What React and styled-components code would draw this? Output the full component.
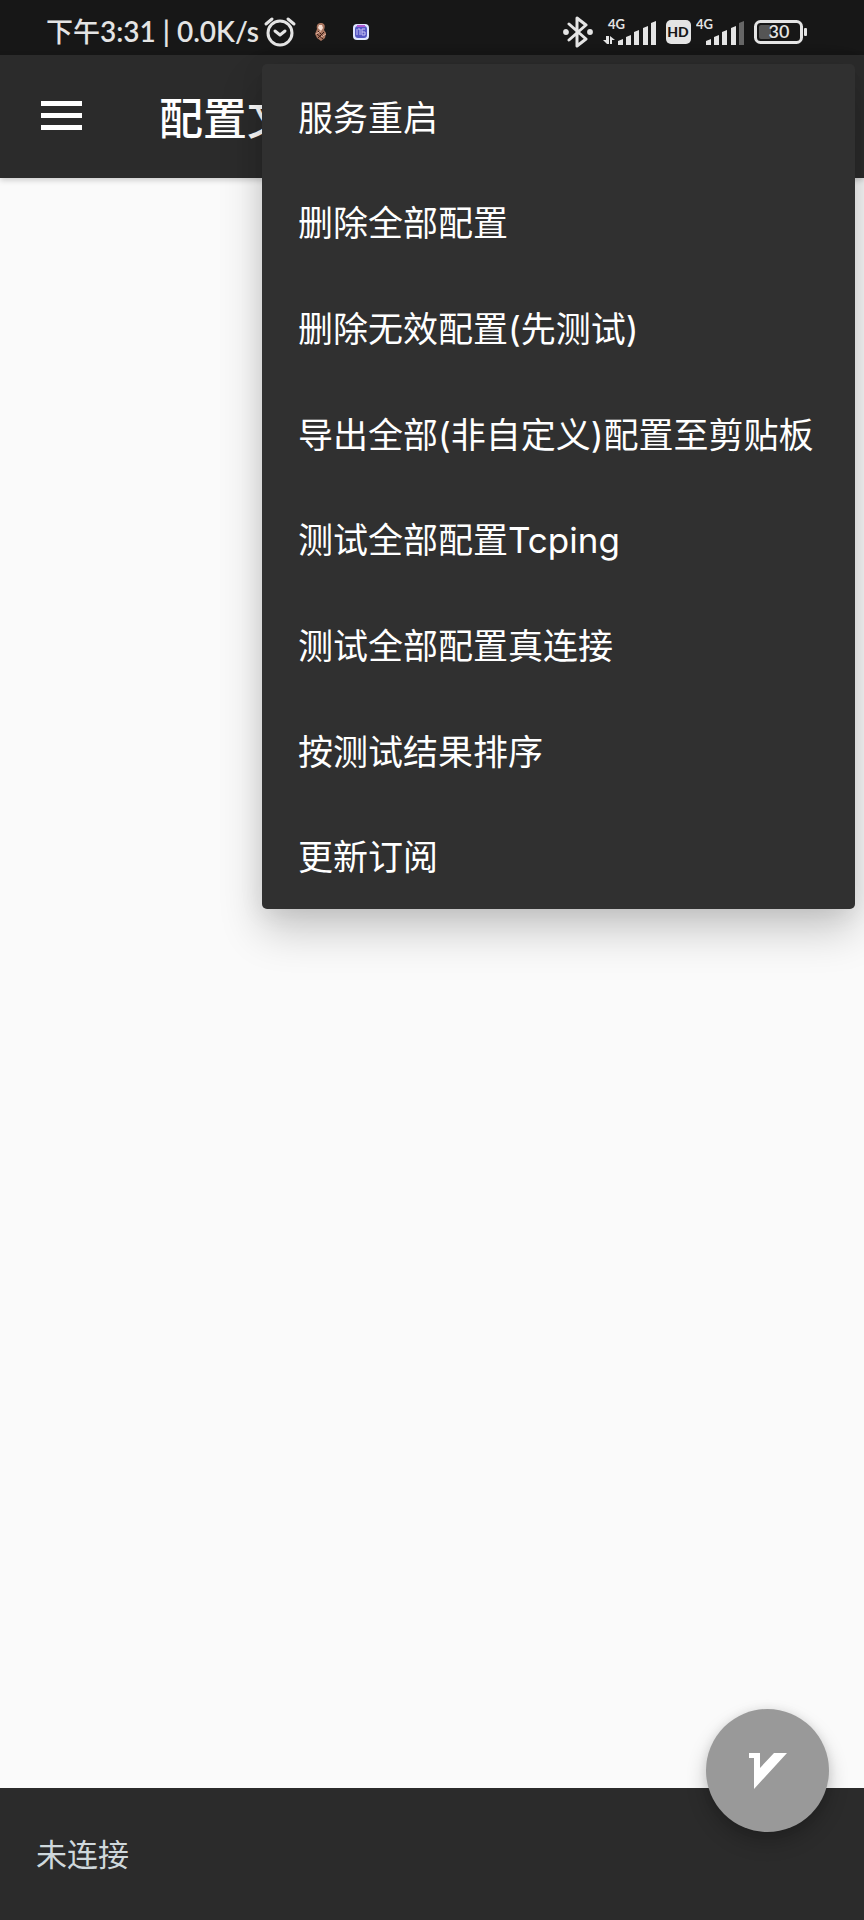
import React from "react";
import styled, { createGlobalStyle } from "styled-components";

const GlobalStyle = createGlobalStyle`
  *, *::before, *::after { box-sizing: border-box; }
  body { margin: 0; background: #fafafa; font-family: Inter, "Noto Sans CJK SC", sans-serif; }
  button { font: inherit; border: 0; cursor: pointer; }
`;

const Screen = styled.div`
  position: relative;
  display: flex;
  flex-direction: column;
  min-height: 100vh;
  overflow: hidden;
`;

const StatusBar = styled.div`
  display: flex;
  align-items: center;
  justify-content: space-between;
  height: 55px;
  padding: 0 56px 4px 46px;
  background: #171717;
  color: #e4e4e4;
`;

const StatusGroup = styled.div`
  display: flex;
  align-items: center;
  gap: ${(p) => p.$gap}px;
  padding-top: ${(p) => p.$top || 0}px;
`;

const Clock = styled.span`
  font-family: Lato, "Noto Sans CJK SC", sans-serif;
  font-size: 27px;
  line-height: 32px;
  font-weight: 500;
  white-space: pre;
`;

const ClockDigits = styled.span`
  font-size: 28px;
  font-weight: 600;
`;

const Notifications = styled.div`
  display: flex;
  align-items: center;
  gap: 26px;
  padding-left: 14px;
`;

const AppBar = styled.header`
  display: flex;
  align-items: center;
  gap: 71px;
  height: 123px;
  padding: 2px 35px 0;
  background: #2b2b2b;
  box-shadow: 0 2px 6px rgba(0, 0, 0, 0.2);
  z-index: 1;
`;

const IconButton = styled.button`
  display: flex;
  padding: 0 0 4px;
  background: none;
  color: #fff;
`;

const Title = styled.h1`
  margin: 0;
  padding-top: 2px;
  color: #fff;
  font-size: 44px;
  line-height: 56px;
  font-weight: 500;
  white-space: nowrap;
`;

const Content = styled.main`
  flex: 1;
  background: #fafafa;
`;

const Footer = styled.footer`
  display: flex;
  align-items: center;
  height: 132px;
  padding: 2px 36px 0;
  background: #2b2b2b;
  color: #cfd8dc;
  font-size: 31px;
  line-height: 40px;
`;

const Menu = styled.div`
  position: absolute;
  z-index: 3;
  top: 64px;
  right: 9px;
  display: grid;
  grid-auto-rows: 1fr;
  min-width: 593px;
  min-height: 845px;
  background: #303030;
  border-radius: 5px;
  box-shadow: 0 22px 44px rgba(0, 0, 0, 0.2), 0 4px 24px rgba(0, 0, 0, 0.08);
`;

const MenuItem = styled.button`
  padding: 2px 36px 0;
  background: none;
  color: #fff;
  font-size: 35px;
  line-height: 48px;
  text-align: left;
  white-space: nowrap;
`;

const Fab = styled.button`
  position: absolute;
  z-index: 2;
  right: 35px;
  bottom: 88px;
  display: grid;
  place-items: center;
  width: 123px;
  height: 123px;
  padding: 0;
  border-radius: 50%;
  background: #999;
  box-shadow: 0 10px 20px rgba(0, 0, 0, 0.22), 0 0 10px rgba(0, 0, 0, 0.08);
`;

const SvgText = styled.text`
  font-family: Lato, sans-serif;
  font-weight: ${(p) => p.$weight || 700};
  font-size: ${(p) => p.$size}px;
`;

const AlarmIcon = () => (
  <svg width="34" height="32" viewBox="0 0 34 32" fill="none" stroke="#e4e4e4" strokeWidth="3" strokeLinecap="round" strokeLinejoin="round" aria-hidden="true">
    <circle cx="17" cy="17" r="12" />
    <path d="M12 15l5 4 5-4" />
    <path d="M3 8l6-5M31 8l-6-5" />
  </svg>
);

const FigureIcon = () => (
  <svg width="12" height="18" viewBox="0 0 12 18" aria-hidden="true">
    <path d="M6 0C3 0 1 2 2 6L0 11l2 4 4 3 4-3 1-5-2-3C11 2 9 0 6 0z" fill="#a8755f" />
    <path d="M4 2h3l1 3-2 3-3-3z" fill="#f6ded2" />
    <path d="M3 8l5 5M9 9l-6 6M2 11l6 5" stroke="#3b1c16" strokeWidth="1" />
    <path d="M1 11l5-3M6 14l5-3" stroke="#e7b6a3" strokeWidth="1" />
  </svg>
);

const BadgeIcon = () => (
  <svg width="16" height="16" viewBox="0 0 16 16" aria-hidden="true">
    <rect width="16" height="16" rx="4" fill="#dfe6ff" />
    <rect x="2" y="2" width="12" height="12" rx="3" fill="#5557c4" />
    <path d="M4 2h8" stroke="#b05ad0" strokeWidth="2" />
    <path d="M4 5v6M7 5h-2M7 5v6M12 5H9v6h3V8H9" fill="none" stroke="#c9c4f5" strokeWidth="1" />
  </svg>
);

const BluetoothIcon = () => (
  <svg width="30" height="32" viewBox="0 0 30 32" fill="none" stroke="#e4e4e4" strokeWidth="3" strokeLinejoin="round" strokeLinecap="round" aria-hidden="true">
    <path d="M6 8l17 15-9 7V2l9 7L6 24" />
    <circle cx="3" cy="16" r="1.4" fill="#e4e4e4" />
    <circle cx="27" cy="16" r="1.4" fill="#e4e4e4" />
  </svg>
);

const BARS = [
  [0, 23],
  [8, 19],
  [16, 14],
  [25, 10],
  [33, 5],
];

const SignalIcon = ({ offset, dim, arrows }) => (
  <svg width={offset + 38} height="32" viewBox={`0 0 ${offset + 38} 32`} fill="#e4e4e4" aria-label="4G">
    <SvgText x={arrows ? 5 : 0} y="13" $size={13}>4G</SvgText>
    {arrows && <path d="M6 20v8H4L0 24h3v-4zM7 28v-8l5 4H9v4z" />}
    {BARS.map(([x, y], i) => (
      <path
        key={x}
        d={`M${offset + x} ${y + 2}l5-2V29h-5z`}
        fill={dim && i === 4 ? "#666" : "#e4e4e4"}
      />
    ))}
  </svg>
);

const HdIcon = () => (
  <svg width="25" height="24" viewBox="0 0 25 24" aria-label="HD">
    <rect width="25" height="24" rx="5" fill="#e4e4e4" />
    <SvgText x="12" y="17" textAnchor="middle" fill="#171717" $size={14} $weight={900}>HD</SvgText>
  </svg>
);

const BatteryIcon = () => (
  <svg width="54" height="24" viewBox="0 0 54 24" aria-label="30%">
    <rect x="1.500" y="1.500" width="46" height="21" rx="5" fill="none" stroke="#e4e4e4" strokeWidth="3" />
    <rect x="5" y="5" width="12" height="14" rx="2" fill="#555" />
    <rect x="50" y="8" width="3" height="8" rx="1" fill="#e4e4e4" />
    <SvgText x="25" y="18" textAnchor="middle" fill="#e4e4e4" $size={18} $weight={600}>30</SvgText>
  </svg>
);

const HamburgerIcon = () => (
  <svg width="53" height="53" viewBox="0 0 53 53" fill="#fff" aria-hidden="true">
    <path d="M6 12h41v5H6zM6 24h41v5H6zM6 36h41v5H6z" />
  </svg>
);

const VLogo = () => (
  <svg width="38" height="36" viewBox="0 0 38 36" fill="#fff" aria-hidden="true">
    <path d="M0 0h11v15L25 0h13L5 36V5H0z" />
  </svg>
);

const ITEMS = [
  "服务重启",
  "删除全部配置",
  "删除无效配置(先测试)",
  "导出全部(非自定义)配置至剪贴板",
  "测试全部配置Tcping",
  "测试全部配置真连接",
  "按测试结果排序",
  "更新订阅",
];

export default function App() {
  return (
    <Screen lang="zh-CN">
      <GlobalStyle />
      <StatusBar>
        <StatusGroup $gap={4} $top={12}>
          <Clock>
            下午<ClockDigits>3:31 | 0.0K/s</ClockDigits>
          </Clock>
          <AlarmIcon />
          <Notifications>
            <FigureIcon />
            <BadgeIcon />
          </Notifications>
        </StatusGroup>
        <StatusGroup $gap={10} $top={12}>
          <BluetoothIcon />
          <SignalIcon offset={15} arrows />
          <StatusGroup $gap={5}>
            <HdIcon />
            <SignalIcon offset={10} dim />
          </StatusGroup>
          <BatteryIcon />
        </StatusGroup>
      </StatusBar>
      <AppBar>
        <IconButton type="button" aria-label="打开导航菜单">
          <HamburgerIcon />
        </IconButton>
        <Title>配置文件</Title>
      </AppBar>
      <Content />
      <Footer>未连接</Footer>
      <Fab type="button" aria-label="连接">
        <VLogo />
      </Fab>
      <Menu role="menu">
        {ITEMS.map((label) => (
          <MenuItem key={label} type="button" role="menuitem">
            {label}
          </MenuItem>
        ))}
      </Menu>
    </Screen>
  );
}
